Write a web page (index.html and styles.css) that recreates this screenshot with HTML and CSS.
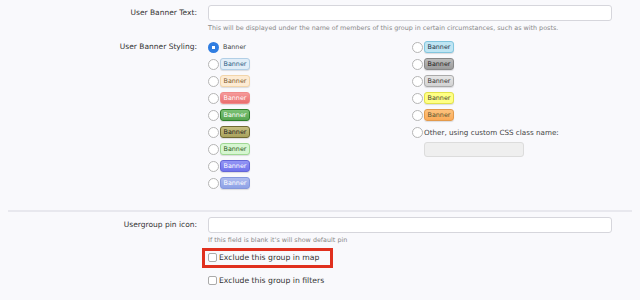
FILE: index.html
```html
<!DOCTYPE html>
<html lang="en">

<head>
    <meta charset="UTF-8">
    <meta name="viewport" content="width=device-width, initial-scale=1.0">
    <title>User Group Options</title>
    <link rel="stylesheet" href="styles.css">
</head>

<body>
    <div class="page">
        <div class="row row-text">
            <label class="label" for="banner-text">User Banner Text:</label>
            <div class="field">
                <input type="text" id="banner-text" class="text-input">
                <p class="hint">This will be displayed under the name of members of this group in certain circumstances, such as with posts.</p>
            </div>
        </div>

        <div class="row row-styling">
            <div class="label">User Banner Styling:</div>
            <div class="options">
                <div class="col">
                    <label class="opt"><input type="radio" name="banner" class="radio" checked><span class="plain">Banner</span></label>
                    <label class="opt"><input type="radio" name="banner" class="radio"><span class="chip primary">Banner</span></label>
                    <label class="opt"><input type="radio" name="banner" class="radio"><span class="chip secondary">Banner</span></label>
                    <label class="opt"><input type="radio" name="banner" class="radio"><span class="chip red">Banner</span></label>
                    <label class="opt"><input type="radio" name="banner" class="radio"><span class="chip green">Banner</span></label>
                    <label class="opt"><input type="radio" name="banner" class="radio"><span class="chip olive">Banner</span></label>
                    <label class="opt"><input type="radio" name="banner" class="radio"><span class="chip lightgreen">Banner</span></label>
                    <label class="opt"><input type="radio" name="banner" class="radio"><span class="chip blue">Banner</span></label>
                    <label class="opt"><input type="radio" name="banner" class="radio"><span class="chip royal">Banner</span></label>
                </div>
                <div class="col">
                    <label class="opt"><input type="radio" name="banner" class="radio"><span class="chip sky">Banner</span></label>
                    <label class="opt"><input type="radio" name="banner" class="radio"><span class="chip gray">Banner</span></label>
                    <label class="opt"><input type="radio" name="banner" class="radio"><span class="chip silver">Banner</span></label>
                    <label class="opt"><input type="radio" name="banner" class="radio"><span class="chip yellow">Banner</span></label>
                    <label class="opt"><input type="radio" name="banner" class="radio"><span class="chip orange">Banner</span></label>
                    <label class="opt"><input type="radio" name="banner" class="radio"><span class="other">Other, using custom CSS class name:</span></label>
                    <input type="text" class="custom-input" disabled>
                </div>
            </div>
        </div>

        <hr class="divider">

        <div class="row row-pin">
            <label class="label" for="pin-icon">Usergroup pin icon:</label>
            <div class="field">
                <input type="text" id="pin-icon" class="text-input">
                <p class="hint">If this field is blank it's will show default pin</p>
                <div class="highlight">
                    <label class="check"><input type="checkbox" class="box">Exclude this group in map</label>
                </div>
                <label class="check check-last"><input type="checkbox" class="box">Exclude this group in filters</label>
            </div>
        </div>
    </div>
</body>

</html>
```

FILE: styles.css
```css
body {
    margin: 0;
    background-color: #f9f9fc;
    font-family: "DejaVu Sans", Verdana, sans-serif;
    color: #333;
}

.page {
    padding-top: 5px;
}

.row {
    display: grid;
    grid-template-columns: 197px 404px;
    column-gap: 11px;
}

.label {
    text-align: right;
    font-size: 7.5px;
    color: #333;
    line-height: 15px;
}

.text-input {
    display: block;
    box-sizing: border-box;
    width: 404px;
    height: 16px;
    margin: 0;
    border: 1px solid #d6d6dc;
    border-radius: 3px;
    background-color: #fff;
}

.hint {
    margin: 3px 0 0;
    font-size: 6.4px;
    line-height: 9px;
    color: #888;
    white-space: nowrap;
}

.row-styling {
    margin-top: 8.5px;
}

.row-styling .label {
    line-height: 10px;
}

.options {
    display: grid;
    grid-template-columns: 204px 1fr;
}

.opt {
    display: flex;
    align-items: center;
    height: 17px;
    margin-top: -3px;
    margin-bottom: 3px;
}

.radio {
    appearance: none;
    box-sizing: border-box;
    width: 11px;
    height: 11px;
    margin: 0 1px 0 0;
    border: 1px solid #b5b5b5;
    border-radius: 50%;
    background-color: #fff;
}

.radio:checked {
    border: none;
    background: radial-gradient(circle, #fff 0 1.5px, #2f7de1 2px);
}

.plain {
    margin-left: 3px;
    font-size: 6.4px;
    color: #444;
}

.other {
    font-size: 7.2px;
    color: #444;
}

.chip {
    box-sizing: border-box;
    display: inline-block;
    width: 30px;
    height: 12px;
    line-height: 10px;
    text-align: center;
    font-size: 6.4px;
    border: 1px solid;
    border-radius: 3px;
    box-shadow: 0 1px 1px rgba(0, 0, 0, 0.12);
}

.primary { background: #e2eef8; border-color: #b2cfe6; color: #2b5c83; }
.secondary { background: #fdebd3; border-color: #f2d5aa; color: #7a5a30; }
.red { background: linear-gradient(#f59a9a, #ea6f6f); border-color: #f08a8a; color: #fff; }
.green { background: linear-gradient(#7cc176, #56a551); border-color: #2f7f2b; color: #fff; }
.olive { background: linear-gradient(#c5be80, #a9a25c); border-color: #6f6a32; color: #222; }
.lightgreen { background: #d6f6d1; border-color: #9fd894; color: #2a5a22; }
.blue { background: linear-gradient(#9496f5, #7073ec); border-color: #6466d8; color: #fff; }
.royal { background: linear-gradient(#aebcef, #8ea2e6); border-color: #8598dd; color: #fff; }
.sky { background: #bfe5f3; border-color: #82c6df; color: #234; }
.gray { background: linear-gradient(#bbb, #9c9c9c); border-color: #888; color: #222; }
.silver { background: linear-gradient(#e6e6e6, #d2d2d2); border-color: #aaa; color: #333; }
.yellow { background: #ffff84; border-color: #e2e24a; color: #443; }
.orange { background: linear-gradient(#fdc27d, #fbab58); border-color: #e39a4c; color: #553; }

.custom-input {
    display: block;
    box-sizing: border-box;
    width: 100px;
    height: 15px;
    margin: -2px 0 0 12px;
    border: 1px solid #dcdcdc;
    border-radius: 3px;
    background-color: #efefef;
}

.divider {
    margin: 15px 8px 0;
    border: none;
    border-top: 2px solid #e8e8ee;
}

.row-pin {
    margin-top: 5px;
}

.highlight {
    width: 119px;
    height: 14px;
    margin: 3px 0 0 -6px;
    padding: 0 3px;
    border: 3px solid #e0301e;
    display: flex;
    align-items: center;
}

.check {
    display: flex;
    align-items: center;
    font-size: 7.7px;
    color: #333;
    white-space: nowrap;
}

.check-last {
    margin-top: 8px;
}

.box {
    appearance: none;
    box-sizing: border-box;
    width: 9px;
    height: 9px;
    margin: 0 2px 0 0;
    border: 1px solid #aaa;
    border-radius: 2px;
    background-color: #fff;
}
```
